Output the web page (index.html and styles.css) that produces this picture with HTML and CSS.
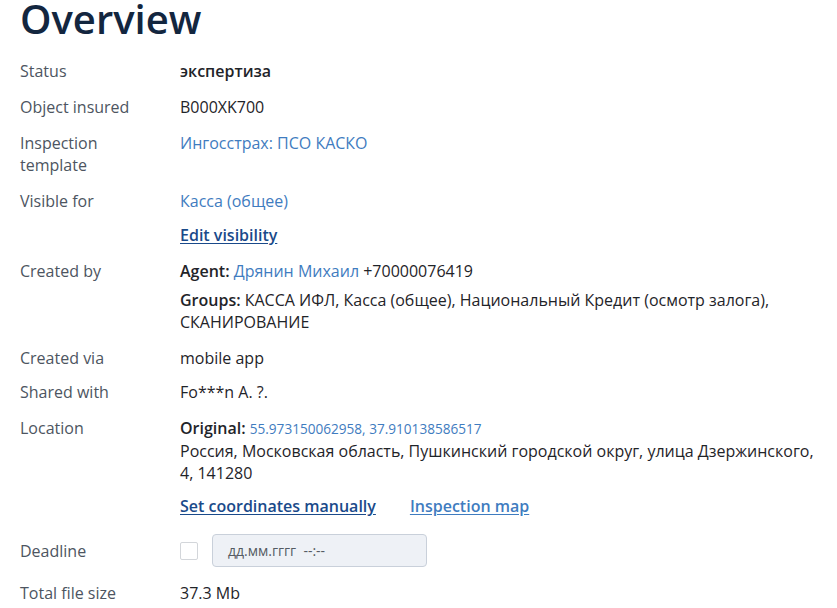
FILE: index.html
```html
<!DOCTYPE html>
<html lang="ru">
<head>
  <meta charset="UTF-8">
  <title>Overview</title>
  <link rel="stylesheet" href="styles.css">
</head>
<body>
  <main class="overview">
    <h1 class="page-title">Overview</h1>

    <div class="info-row">
      <div class="info-label">Status</div>
      <div class="info-value"><strong>экспертиза</strong></div>
    </div>

    <div class="info-row">
      <div class="info-label">Object insured</div>
      <div class="info-value">B000XK700</div>
    </div>

    <div class="info-row">
      <div class="info-label">Inspection<br>template</div>
      <div class="info-value"><a href="#" class="link">Ингосстрах: ПСО КАСКО</a></div>
    </div>

    <div class="info-row">
      <div class="info-label">Visible for</div>
      <div class="info-value">
        <a href="#" class="link">Касса (общее)</a>
        <div class="action-links action-links-tight">
          <a href="#" class="action action-dark">Edit visibility</a>
        </div>
      </div>
    </div>

    <div class="info-row">
      <div class="info-label">Created by</div>
      <div class="info-value">
        <div><strong>Agent:</strong> <a href="#" class="link">Дрянин Михаил</a> +70000076419</div>
        <div class="groups"><strong>Groups:</strong> КАССА ИФЛ, Касса (общее), Национальный Кредит (осмотр залога), СКАНИРОВАНИЕ</div>
      </div>
    </div>

    <div class="info-row row-short">
      <div class="info-label">Created via</div>
      <div class="info-value">mobile app</div>
    </div>

    <div class="info-row">
      <div class="info-label">Shared with</div>
      <div class="info-value">Fo***n A. ?.</div>
    </div>

    <div class="info-row">
      <div class="info-label">Location</div>
      <div class="info-value">
        <div class="coords"><strong>Original:</strong> <a href="#" class="link">55.973150062958, 37.910138586517</a></div>
        <div>Россия, Московская область, Пушкинский городской округ, улица Дзержинского, 4, 141280</div>
        <div class="action-links">
          <a href="#" class="action action-dark">Set coordinates manually</a>
          <a href="#" class="action">Inspection map</a>
        </div>
      </div>
    </div>

    <div class="info-row deadline-row">
      <div class="info-label">Deadline</div>
      <div class="info-value deadline-value">
        <input type="checkbox" class="deadline-check">
        <div class="date-input">дд.мм.гггг&nbsp; --:--</div>
      </div>
    </div>

    <div class="info-row">
      <div class="info-label">Total file size</div>
      <div class="info-value">37.3 Mb</div>
    </div>
  </main>
</body>
</html>
```

FILE: styles.css
```css
/* ---------- BASE ---------- */
* {
  margin: 0;
  padding: 0;
  box-sizing: border-box;
}
body {
  font-family: 'Open Sans', 'Noto Sans', sans-serif;
  font-size: 16px;
  line-height: 22px;
  color: #1f2429;
  background: #fff;
  overflow: hidden;
}
a {
  color: inherit;
  text-decoration: none;
}

/* ---------- PAGE ---------- */
.overview {
  padding: 0 17px 0 20px;
}
.page-title {
  font-size: 40px;
  line-height: 48px;
  font-weight: 600;
  color: #13263f;
  margin-top: -5px;
  margin-bottom: 17px;
}

/* ---------- ROWS ---------- */
.info-row {
  display: grid;
  grid-template-columns: 160px 1fr;
  margin-bottom: 14px;
}
.row-short {
  margin-bottom: 12px;
}
.info-label {
  color: #4d5561;
}
.info-value strong {
  font-weight: 600;
}
.link {
  color: #3f7cc0;
}
.groups {
  margin-top: 7px;
}
.coords .link {
  font-size: 13.6px;
}

/* liens d'action soulignés */
.action-links {
  display: flex;
  gap: 34px;
  margin-top: 11px;
}
.action-links-tight {
  margin-top: 12px;
}
.action {
  font-weight: 600;
  color: #3f7cc0;
  text-decoration: underline;
  text-underline-offset: 2px;
}
.action-dark {
  color: #1a4a8a;
}

/* ---------- DEADLINE ---------- */
.deadline-row {
  align-items: center;
  margin-bottom: 11px;
}
.deadline-value {
  display: flex;
  align-items: center;
  gap: 14px;
  padding: 3px 0 4px;
}
.deadline-check {
  appearance: none;
  width: 18px;
  height: 18px;
  border: 1px solid #d3d6da;
  border-radius: 2px;
  background: #fff;
}
.date-input {
  width: 215px;
  height: 33px;
  padding: 0 15px;
  display: flex;
  align-items: center;
  background: #eef1f6;
  border: 1px solid #c9d0da;
  border-radius: 4px;
  font-size: 14px;
  color: #555b63;
}
```
